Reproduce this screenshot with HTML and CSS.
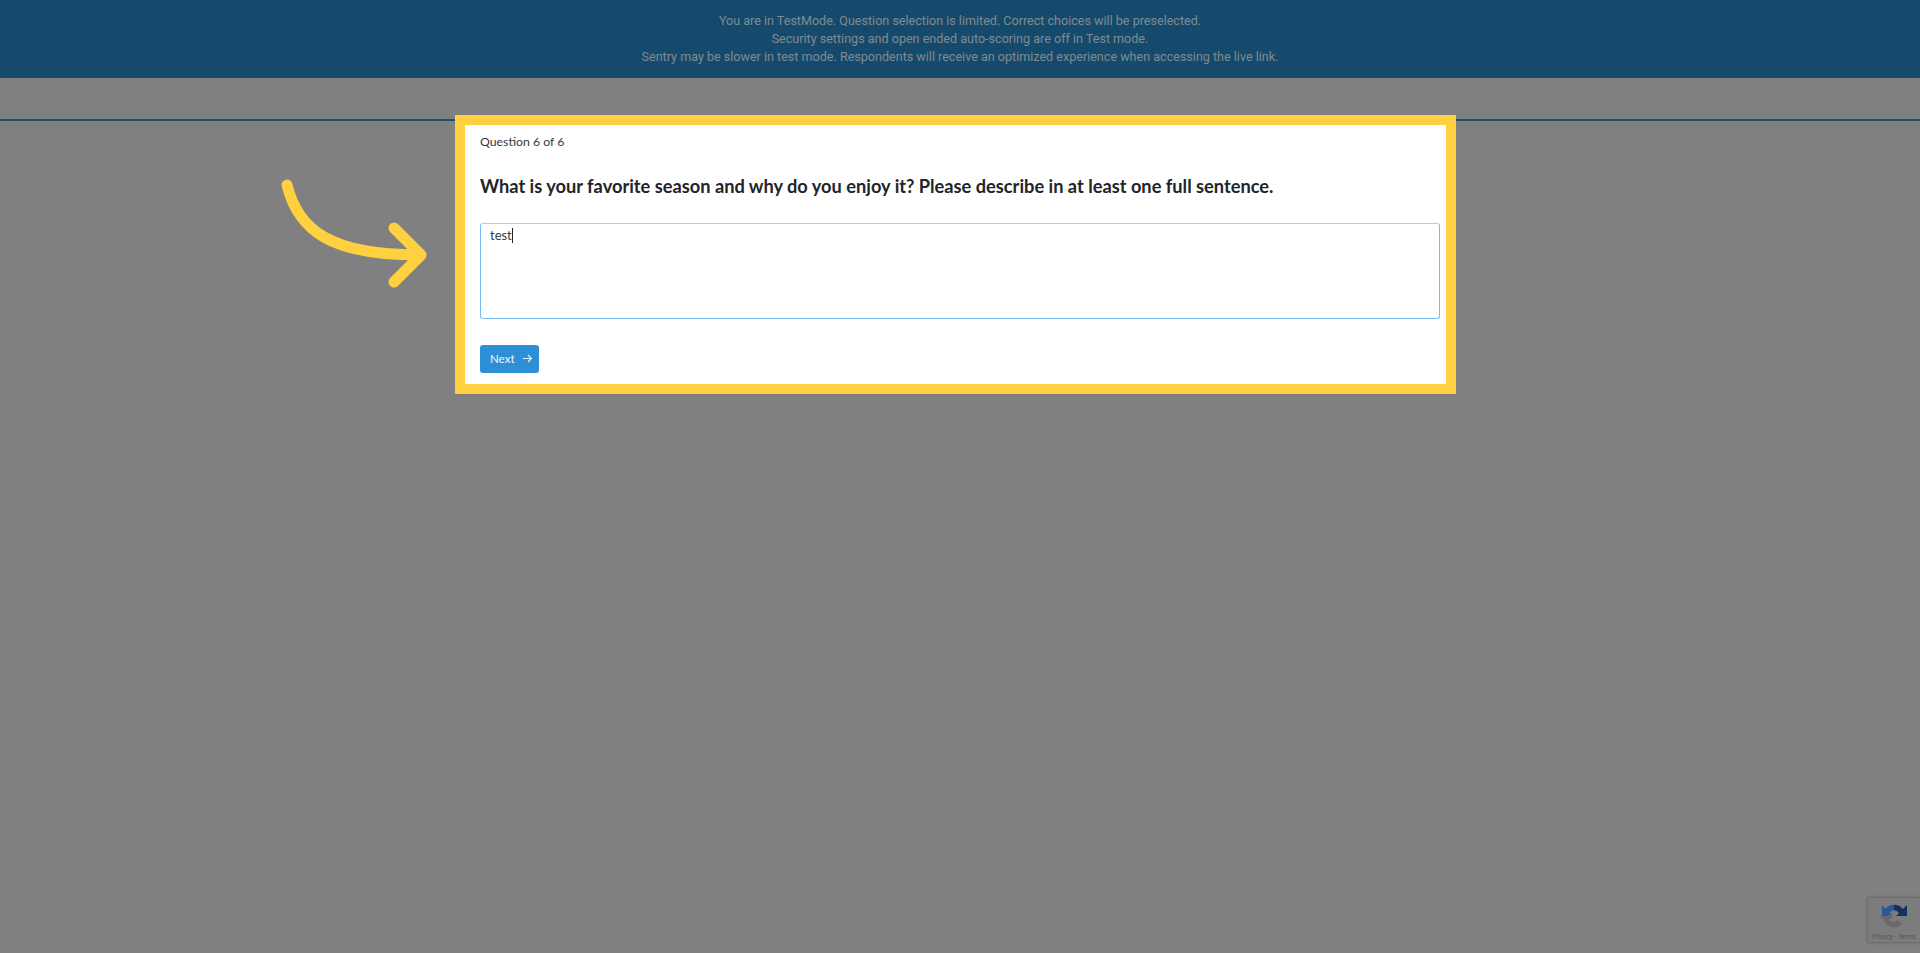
FILE: index.html
```html
<!DOCTYPE html>
<html lang="en">
<head>
<meta charset="utf-8">
<title>Test mode question</title>
<link rel="stylesheet" href="styles.css">
</head>
<body>
<header class="banner">
  <p>You are in TestMode. Question selection is limited. Correct choices will be preselected.</p>
  <p>Security settings and open ended auto-scoring are off in Test mode.</p>
  <p>Sentry may be slower in test mode. Respondents will receive an optimized experience when accessing the live link.</p>
</header>
<div class="topbar"></div>

<svg class="arrow" width="160" height="130" viewBox="0 0 160 130" aria-hidden="true">
  <path d="M17 15C28 60 60 85 149 85M124 58L151 85L124 112" fill="none" stroke="#ffd040" stroke-width="11" stroke-linecap="round" stroke-linejoin="round"/>
</svg>

<section class="highlight">
  <div class="card">
    <div class="count">Question 6 of 6</div>
    <h1 class="question">What is your favorite season and why do you enjoy it? Please describe in at least one full sentence.</h1>
    <div class="answer">test<span class="caret"></span></div>
    <button class="next" type="button">Next
      <svg width="11" height="11" viewBox="0 0 11 11" aria-hidden="true"><path d="M1 5.500H9.500M6 2L9.500 5.500L6 9" fill="none" stroke="#e8f3fb" stroke-width="1.100"/></svg>
    </button>
  </div>
</section>

<aside class="recaptcha">
  <svg class="recaptcha-logo" width="28" height="28" viewBox="0 0 28 28" aria-hidden="true">
    <path d="M5.500 14A8.500 8.500 0 0 0 20 20" fill="none" stroke="#696969" stroke-width="5.500"/>
    <path d="M12 13H1V17H12Z" fill="#696969"/>
    <path d="M14 5.500A8.500 8.500 0 0 0 5.500 14" fill="none" stroke="#2a5a94" stroke-width="5.500"/>
    <path d="M2 3V13H12Z" fill="#2a5a94"/>
    <path d="M14 5.500A8.500 8.500 0 0 1 22.500 14" fill="none" stroke="#14305f" stroke-width="5.500"/>
    <path d="M27 3V14H16Z" fill="#14305f"/>
  </svg>
  <span class="recaptcha-links">Privacy - Terms</span>
</aside>
</body>
</html>
```
FILE: styles.css
```css
* { box-sizing: border-box; }
html, body { height: 100%; }
body {
  margin: 0;
  background: #808080;
  font-family: "Inter", "Liberation Sans", sans-serif;
  overflow: hidden;
  position: relative;
}
.banner {
  height: 78px;
  background: #164a6d;
  padding-top: 12px;
  text-align: center;
  color: #7f8a91;
  font-family: "Roboto", sans-serif;
  font-size: 12.57px;
  line-height: 18px;
}
.banner p { margin: 0; }
.topbar {
  height: 43px;
  border-bottom: 2px solid #1d5070;
}
.arrow {
  position: absolute;
  left: 270px;
  top: 170px;
}
.highlight {
  position: absolute;
  left: 455px;
  top: 115px;
  width: 1001px;
  height: 279px;
  border: 10px solid #ffd040;
  background: #fff;
}
.card {
  padding: 9px 6px 0 15px;
  color: #212529;
  font-family: "Lato", "Liberation Sans", sans-serif;
}
.count {
  font-size: 12.3px;
  line-height: 16px;
  color: #343a40;
}
.question {
  margin: 24px 0 0;
  font-size: 18.23px;
  line-height: 24px;
  font-weight: 700;
  color: #212529;
}
.answer {
  margin-top: 25px;
  height: 96px;
  border: 1px solid #78bbee;
  border-top-color: #a5d3f3;
  border-radius: 3px;
  padding: 2px 9px;
  font-size: 13px;
  line-height: 18px;
  color: #343a40;
}
.caret {
  display: inline-block;
  width: 1px;
  height: 15px;
  background: #212529;
  vertical-align: text-bottom;
}
.next {
  display: flex;
  align-items: center;
  gap: 7px;
  margin-top: 26px;
  width: 59px;
  height: 28px;
  padding: 0 0 1px 10px;
  border: 0;
  border-radius: 3px;
  background: #2d8fd5;
  color: #e8f3fb;
  font-family: "Lato", "Liberation Sans", sans-serif;
  font-size: 11.5px;
  font-weight: 500;
}
.recaptcha {
  position: absolute;
  left: 1867px;
  top: 897px;
  width: 53px;
  height: 46px;
  border: 1px solid #6e6e6e;
  border-right: 0;
  border-radius: 2px 0 0 2px;
  background: #7c7c7c;
  box-shadow: 0 0 3px #666;
  display: flex;
  flex-direction: column;
  align-items: center;
  padding-top: 4px;
}
.recaptcha-logo { flex: none; }
.recaptcha-links {
  margin-top: 3px;
  font-family: "Roboto", sans-serif;
  font-size: 6.5px;
  line-height: 9px;
  white-space: nowrap;
  color: #555;
}
```
